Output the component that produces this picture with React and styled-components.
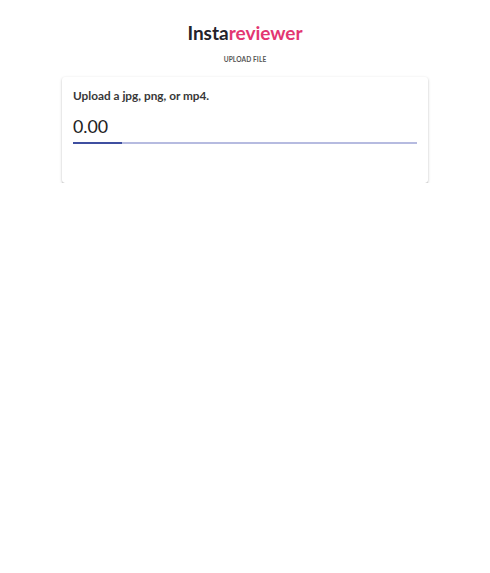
import React from "react";
import styled, { createGlobalStyle } from "styled-components";

const Global = createGlobalStyle`
  html, body { margin: 0; padding: 0; background: #fff; }
  body { font-family: Lato, "Open Sans", sans-serif; color: #222; }
`;

const Page = styled.div`
  display: flex;
  flex-direction: column;
  align-items: center;
`;

const Title = styled.h1`
  margin: 21px 0 0;
  font-size: 19px;
  font-weight: 700;
  line-height: 24px;
  color: #23222a;
`;

const Accent = styled.span`
  color: #e33672;
`;

const UploadButton = styled.button`
  margin-top: 7px;
  border: 0;
  background: transparent;
  font-family: Lato, "Open Sans", sans-serif;
  font-size: 6.6px;
  font-weight: 700;
  letter-spacing: 0.1px;
  color: #555;
  padding: 3px 6px;
  line-height: 9px;
  cursor: pointer;
`;

const Card = styled.div`
  margin-top: 10px;
  width: 366px;
  height: 106px;
  box-sizing: border-box;
  padding: 12px 11px;
  background: #fff;
  border-radius: 3px;
  box-shadow: 0 1px 3px rgba(0,0,0,0.22), 0 1px 1px rgba(0,0,0,0.14), 0 2px 1px -1px rgba(0,0,0,0.12);
`;

const Hint = styled.div`
  font-size: 11.8px;
  font-weight: 700;
  color: #383838;
  line-height: 14px;
`;

const Value = styled.div`
  margin-top: 12px;
  font-size: 17.8px;
  line-height: 22px;
  color: #222;
`;

const Track = styled.div`
  margin-top: 5px;
  height: 2px;
  background: #b6bbe0;
  overflow: hidden;
`;

const Bar = styled.div`
  height: 100%;
  background: #3f4fa0;
`;

export default function App() {
  const progress = 14.2;
  return (
    <>
      <Global />
      <Page>
        <Title>
          Insta<Accent>reviewer</Accent>
        </Title>
        <UploadButton>UPLOAD FILE</UploadButton>
        <Card>
          <Hint>Upload a jpg, png, or mp4.</Hint>
          <Value>0.00</Value>
          <Track>
            <Bar style={{ width: `${progress}%` }} />
          </Track>
        </Card>
      </Page>
    </>
  );
}
